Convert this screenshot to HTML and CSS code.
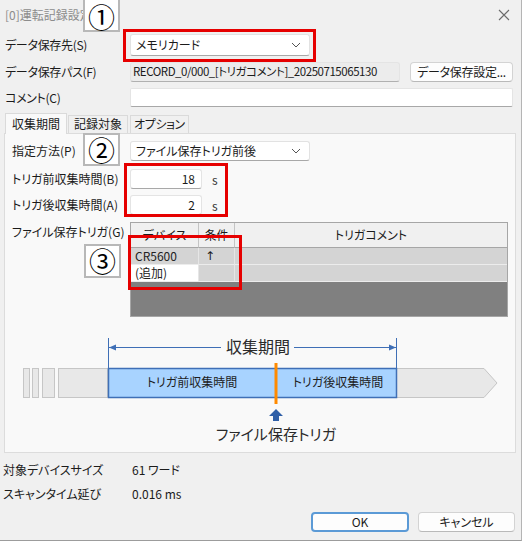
FILE: index.html
```html
<!DOCTYPE html>
<html lang="ja">
<head>
    <meta charset="UTF-8">
    <title>運転記録設定</title>
    <link rel="stylesheet" href="styles.css">
</head>
<body>
    <div class="dialog">
        <!-- barra del titolo -->
        <div class="titlebar">
            <span class="title">[0]運転記録設定</span>
            <svg class="close" width="12" height="12" viewBox="0 0 12 12"><path d="M1 1L11 11M11 1L1 11" stroke="#6b6b6b" stroke-width="1.1" fill="none"/></svg>
        </div>

        <div class="row row-dest">
            <label>データ保存先(S)</label>
            <div class="select">メモリカード
                <svg width="10" height="6" viewBox="0 0 10 6"><path d="M1 1L5 5L9 1" stroke="#555" stroke-width="1" fill="none"/></svg>
            </div>
        </div>
        <div class="row row-path">
            <label>データ保存パス(F)</label>
            <div class="path">RECORD_0/000_[トリガコメント]_20250715065130</div>
            <button class="btn btn-save">データ保存設定...</button>
        </div>
        <div class="row row-comment">
            <label>コメント(C)</label>
            <div class="comment"></div>
        </div>

        <div class="tabs">
            <div class="tab active">収集期間</div>
            <div class="tab">記録対象</div>
            <div class="tab tab-opt">オプション</div>
        </div>

        <div class="panel">
            <div class="prow">
                <label>指定方法(P)</label>
                <div class="select">ファイル保存トリガ前後
                    <svg width="10" height="6" viewBox="0 0 10 6"><path d="M1 1L5 5L9 1" stroke="#555" stroke-width="1" fill="none"/></svg>
                </div>
            </div>
            <div class="prow num-first">
                <label>トリガ前収集時間(B)</label>
                <div class="num">18</div><span class="unit">s</span>
            </div>
            <div class="prow num-second">
                <label>トリガ後収集時間(A)</label>
                <div class="num">2</div><span class="unit">s</span>
            </div>
            <div class="prow trig-row">
                <label>ファイル保存トリガ(G)</label>
                <div class="grid">
                    <div class="th">デバイス</div>
                    <div class="th">条件</div>
                    <div class="th th-last">トリガコメント</div>
                    <div class="td">CR5600</div>
                    <div class="td td-arrow">↑</div>
                    <div class="td td-last"></div>
                    <div class="td td-add">(追加)</div>
                    <div class="td"></div>
                    <div class="td td-last"></div>
                    <div class="empty"></div>
                </div>
            </div>

            <svg class="diagram" width="511" height="115" viewBox="0 0 511 115">
                <!-- blocchi grigi a sinistra -->
                <g fill="#e8e8e8" stroke="#c6c6c6" stroke-width="1">
                    <rect x="18.5" y="36.5" width="6" height="29"/>
                    <rect x="27.5" y="36.5" width="6" height="29"/>
                    <rect x="37.5" y="36.5" width="12" height="29"/>
                    <rect x="53.5" y="36.5" width="49" height="29"/>
                    <path d="M391 36.5H479L492 51L479 65.5H391Z"/>
                </g>
                <rect x="103.5" y="36.5" width="288" height="29" fill="#a8d3ff" stroke="#3f6fb6" stroke-width="1.5"/>
                <line x1="271" y1="31" x2="271" y2="72" stroke="#ff8a00" stroke-width="3"/>
                <text x="187" y="55" class="dtext">トリガ前収集時間</text>
                <text x="333" y="55" class="dtext">トリガ後収集時間</text>

                <!-- parentesi del periodo -->
                <g stroke="#3f6fb6" stroke-width="1" fill="none">
                    <line x1="103.5" y1="6" x2="103.5" y2="36"/>
                    <line x1="391.5" y1="6" x2="391.5" y2="36"/>
                    <line x1="104" y1="15.5" x2="216" y2="15.5"/>
                    <line x1="289" y1="15.5" x2="391" y2="15.5"/>
                </g>
                <path d="M104 15.5L111 12.5V18.5Z" fill="#3f6fb6"/>
                <path d="M391 15.5L384 12.5V18.5Z" fill="#3f6fb6"/>
                <text x="253" y="21" class="dtitle dbig">収集期間</text>

                <!-- freccia trigger -->
                <path d="M271 77L278 84H274V89H268V84H264Z" fill="#2f5fa7"/>
                <text x="271" y="108" class="dtitle">ファイル保存トリガ</text>
            </svg>
        </div>

        <div class="info">
            <div class="irow"><span class="ilabel">対象デバイスサイズ</span><span>61 ワード</span></div>
            <div class="irow"><span class="ilabel">スキャンタイム延び</span><span>0.016 ms</span></div>
        </div>

        <div class="buttons">
            <button class="btn btn-ok">OK</button>
            <button class="btn btn-cancel">キャンセル</button>
        </div>

        <!-- annotazioni sopra lo screenshot -->
        <div class="badge badge-1">①</div>
        <div class="badge badge-2">②</div>
        <div class="badge badge-3">③</div>
        <div class="mark mark-1"></div>
        <div class="mark mark-2"></div>
        <div class="mark mark-3"></div>
    </div>
</body>
</html>
```

FILE: styles.css
```css
/* Base */
body {
    margin: 0;
    background: #ffffff;
    font-family: "Noto Sans CJK JP", sans-serif;
    font-feature-settings: "palt";
    font-size: 12px;
    color: #1b1b1b;
}

.dialog {
    position: relative;
    width: 521px;
    height: 540px;
    background: #f0f0f0;
    border-right: 1px solid #b4b4b4;
    border-bottom: 1px solid #9c9c9c;
    display: flex;
    flex-direction: column;
    overflow: hidden;
}

/* Barra del titolo */
.titlebar {
    height: 30px;
    display: flex;
    align-items: center;
    justify-content: space-between;
    padding: 0 11px 0 5px;
}

.title {
    color: #8c8c8c;
    line-height: 16px;
}

/* Righe del modulo superiore */
.row {
    display: flex;
    align-items: center;
    padding-left: 5px;
}

.row label {
    width: 125px;
    line-height: 16px;
    letter-spacing: -0.3px;
}

.row-dest {
    margin-top: 3px;
    height: 24px;
}

.row-path {
    margin-top: 5px;
    height: 20px;
}

.row-comment {
    margin-top: 6px;
    height: 19px;
}

.select {
    box-sizing: border-box;
    width: 180px;
    height: 22px;
    display: flex;
    align-items: center;
    justify-content: space-between;
    padding: 0 8px 0 5px;
    background: #ffffff;
    border: 1px solid #e2e2e2;
    border-bottom-color: #a8a8a8;
    border-radius: 3px;
    line-height: 16px;
}

.path {
    box-sizing: border-box;
    width: 270px;
    height: 20px;
    padding-left: 2px;
    background: #ececec;
    border: 1px solid #e4e4e4;
    border-bottom-color: #b0b0b0;
    border-radius: 3px;
    font-size: 11.5px;
    letter-spacing: -0.45px;
    line-height: 17px;
    white-space: nowrap;
    overflow: hidden;
}

.comment {
    box-sizing: border-box;
    width: 383px;
    height: 19px;
    background: #ffffff;
    border: 1px solid #e4e4e4;
    border-bottom-color: #a8a8a8;
    border-radius: 2px;
}

.btn {
    box-sizing: border-box;
    font-family: inherit;
    font-feature-settings: "palt";
    font-size: 12px;
    color: #1b1b1b;
    background: #fdfdfd;
    border: 1px solid #d3d3d3;
    border-bottom-color: #b9b9b9;
    border-radius: 4px;
    padding: 0;
    line-height: 16px;
}

.btn-save {
    width: 103px;
    height: 20px;
    margin-left: 10px;
    letter-spacing: -0.3px;
}

/* Schede */
.tabs {
    display: flex;
    align-items: flex-end;
    height: 20px;
    margin-top: 6px;
    padding-left: 5px;
    gap: 1px;
}

.tab {
    box-sizing: border-box;
    width: 60px;
    height: 18px;
    text-align: center;
    line-height: 16px;
    background: #f0f0f0;
    border: 1px solid #dadada;
    border-bottom: none;
    white-space: nowrap;
}

.tab.active {
    width: 62px;
    height: 21px;
    margin-bottom: -1px;
    line-height: 19px;
    background: #f9f9f9;
    position: relative;
    z-index: 1;
}

.tab-opt {
    width: auto;
    margin-left: 1px;
    padding: 0 3px;
    letter-spacing: -0.4px;
}

/* Pannello della scheda */
.panel {
    box-sizing: border-box;
    height: 320px;
    margin: 0 5px 0 4px;
    padding: 7px 0 0 7px;
    background: #f9f9f9;
    border: 1px solid #dcdcdc;
}

.prow {
    display: flex;
    align-items: center;
    height: 20px;
}

.prow label {
    width: 118px;
    line-height: 16px;
}

.prow .select {
    height: 20px;
}

.num-first {
    margin-top: 8px;
}

.num-second {
    margin-top: 6px;
}

.num {
    box-sizing: border-box;
    width: 72px;
    height: 20px;
    padding-right: 6px;
    text-align: right;
    line-height: 18px;
    background: #ffffff;
    border: 1px solid #e4e4e4;
    border-bottom-color: #a8a8a8;
    border-radius: 3px;
}

.unit {
    margin-left: 10px;
    color: #333;
}

/* Tabella dei trigger */
.trig-row {
    align-items: flex-start;
    height: auto;
    margin-top: 7px;
}

.trig-row label {
    line-height: 20px;
}

.grid {
    box-sizing: border-box;
    width: 378px;
    display: grid;
    grid-template-columns: 68px 36px 1fr;
    grid-template-rows: 25px 17px 17px 34px;
    border: 1px solid #a6a6a6;
    background: #808080;
}

.th {
    background: #f0f0f0;
    border-right: 1px solid #c4c4c4;
    border-bottom: 1px solid #a6a6a6;
    text-align: center;
    line-height: 24px;
}

.td {
    background: #d4d4d4;
    border-right: 1px solid #e6e6e6;
    border-bottom: 1px solid #ececec;
    padding-left: 4px;
    line-height: 16px;
    color: #222;
}

.td-arrow {
    font-family: "DejaVu Sans", sans-serif;
    font-size: 12px;
    color: #1b1b1b;
    padding-left: 6px;
}

.th-last,
.td-last {
    border-right: none;
}

.td-add {
    background: #ffffff;
}

.empty {
    grid-column: 1 / 4;
    background: #808080;
}

/* Diagramma */
.diagram {
    display: block;
    margin: 15px 0 0 -7px;
}

.dtext {
    font-family: "Noto Sans CJK JP", sans-serif;
    font-size: 12px;
    fill: #1e1e1e;
    text-anchor: middle;
    font-feature-settings: "palt";
}

.dtitle {
    font-family: "Noto Sans CJK JP", sans-serif;
    font-size: 15px;
    fill: #2a2a2a;
    text-anchor: middle;
    font-feature-settings: "palt";
}

.dbig {
    font-size: 16px;
}

/* Informazioni in basso */
.info {
    margin-top: 7px;
    padding-left: 3px;
    display: flex;
    flex-direction: column;
    gap: 4px;
}

.irow {
    display: flex;
    height: 20px;
    align-items: center;
    line-height: 16px;
}

.ilabel {
    width: 129px;
}

/* Pulsanti */
.buttons {
    display: flex;
    justify-content: flex-end;
    gap: 9px;
    margin-top: 8px;
    padding-right: 6px;
}

.btn-ok {
    width: 98px;
    height: 20px;
    border: 2px solid #5b9ad6;
    border-radius: 4px;
    line-height: 16px;
}

.btn-cancel {
    width: 97px;
    height: 20px;
}

/* Annotazioni */
.badge {
    position: absolute;
    left: 83px;
    width: 37px;
    box-sizing: border-box;
    background: #ffffff;
    border: 2px solid #b8b8b8;
    color: #000;
    font-size: 27px;
    text-align: center;
    z-index: 5;
}

.badge-1 {
    top: -2px;
    height: 34px;
    line-height: 34px;
}

.badge-2 {
    top: 133px;
    height: 33px;
    line-height: 29px;
}

.badge-3 {
    top: 244px;
    left: 84px;
    height: 34px;
    line-height: 30px;
}

.mark {
    position: absolute;
    box-sizing: border-box;
    border: 3px solid #e60000;
    z-index: 4;
}

.mark-1 {
    left: 123px;
    top: 29px;
    width: 193px;
    height: 33px;
}

.mark-2 {
    left: 124px;
    top: 163px;
    width: 104px;
    height: 54px;
}

.mark-3 {
    left: 128px;
    top: 235px;
    width: 114px;
    height: 55px;
}
```
